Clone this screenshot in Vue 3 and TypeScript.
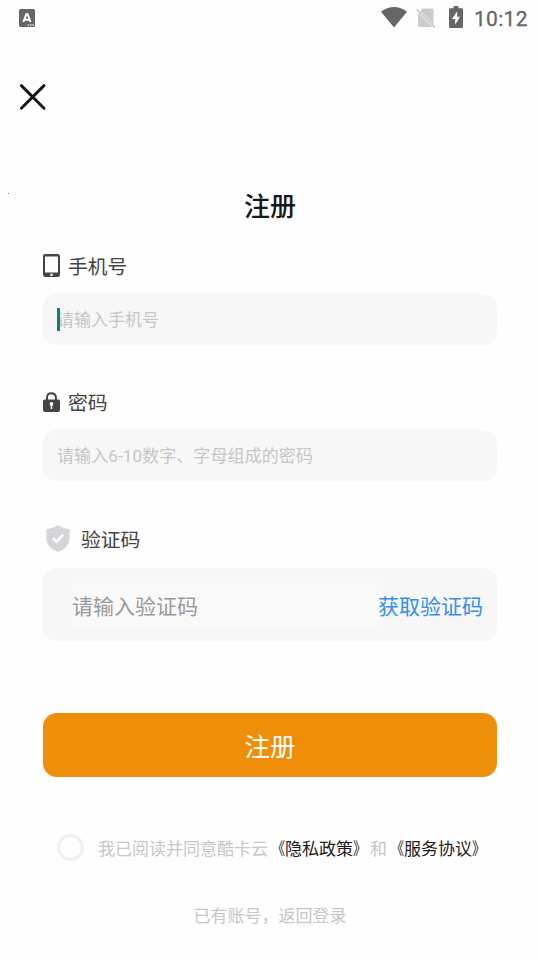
<script setup lang="ts">
import { ref } from 'vue'

const phone = ref('')
const password = ref('')
const code = ref('')
const agreed = ref(false)
</script>

<template>
  <div class="screen">
    <header class="status-bar">
      <svg class="app-icon" viewBox="0 0 16 18">
        <rect width="16" height="18" rx="1.5" fill="#666" />
        <path d="M4.4 13 L7.3 5.2 H8.6 L11.5 13 M5.8 10.7 H10.1" fill="none" stroke="#fff" stroke-width="1.9" />
        <path d="M8.6 16 H15" fill="none" stroke="#ddd" stroke-width="1.3" stroke-dasharray="1.6 .8" />
      </svg>
      <div class="status-right">
        <svg class="wifi" viewBox="0 0 26 21">
          <path d="M0 4.8 C7.5 -1.5 18.5 -1.5 26 4.8 L13 20.6 Z" fill="#666" />
        </svg>
        <svg class="no-sim" viewBox="0 0 20 20">
          <path d="M6.5 .4 H16 Q17.6 .4 17.6 2 V16.4 L4.2 3 Z M2 4.5 L16.4 19 H3.6 Q2 19 2 17.4 Z" fill="#ccc" />
          <path d="M.6 1.2 L18.8 19.4" stroke="#c4c4c4" stroke-width="1.5" />
        </svg>
        <svg class="battery" viewBox="0 0 14 22">
          <path d="M4.5 0 H9.5 V2.2 H12.8 Q14 2.2 14 3.4 V20.8 Q14 22 12.8 22 H1.2 Q0 22 0 20.8 V3.4 Q0 2.2 1.2 2.2 H4.5 Z" fill="#666" />
          <path d="M8.2 5.2 L3 13 H6.2 V18.8 L11 10.8 H8.2 Z" fill="#fff" />
        </svg>
        <time class="clock">10:12</time>
      </div>
    </header>

    <nav class="nav">
      <button class="close" type="button" aria-label="关闭">
        <svg viewBox="0 0 26 26">
          <path d="M1.4 1.6 L24 24.2 M24 1.6 L1.4 24.2" stroke="#151515" stroke-width="2.9" stroke-linecap="round" />
        </svg>
      </button>
    </nav>

    <div class="heading">
      <i class="speck"></i>
      <h1>注册</h1>
    </div>

    <form class="form" @submit.prevent>
      <section class="field">
        <label class="label" for="phone">
          <svg class="phone-icon" viewBox="0 0 17 23">
            <path fill-rule="evenodd" d="M2.2 0 H14.8 Q17 0 17 2.2 V20.8 Q17 23 14.8 23 H2.2 Q0 23 0 20.8 V2.2 Q0 0 2.2 0 Z M2 2.4 V18.6 H15 V2.4 Z" fill="#444" />
            <circle cx="8.5" cy="20.7" r="1.3" fill="#fff" />
          </svg>
          手机号
        </label>
        <div class="box">
          <input id="phone" v-model="phone" placeholder="请输入手机号" />
          <i class="caret"></i>
        </div>
      </section>

      <section class="field password">
        <label class="label" for="password">
          <svg class="lock-icon" viewBox="0 0 18 20" preserveAspectRatio="none">
            <path d="M4.3 8.5 V5.8 Q4.3 1.2 9 1.2 Q13.7 1.2 13.7 5.8 V8.5" fill="none" stroke="#444" stroke-width="2.1" />
            <rect y="7.5" width="18" height="12.5" rx="2" fill="#444" />
            <circle cx="9" cy="12" r="1.9" fill="#fff" />
            <path d="M8.2 12.5 H9.8 V17 H8.2 Z" fill="#fff" />
          </svg>
          密码
        </label>
        <div class="box">
          <input id="password" v-model="password" placeholder="请输入6-10数字、字母组成的密码" />
        </div>
      </section>

      <section class="field verify">
        <label class="label" for="code">
          <svg class="shield-icon" viewBox="0 0 24 27">
            <path d="M12 0 Q17 3.7 23.6 4 V14 Q23 22.5 12 27 Q1 22.5 .4 14 V4 Q7 3.7 12 0 Z" fill="#d3d5d8" />
            <path d="M6.8 13.2 L10.6 16.7 L17.2 9.9" fill="none" stroke="#fff" stroke-width="2.7" />
          </svg>
          验证码
        </label>
        <div class="box code-box">
          <input id="code" v-model="code" placeholder="请输入验证码" />
          <button class="get-code" type="button">获取验证码</button>
        </div>
      </section>

      <button class="submit" type="submit">注册</button>

      <div class="agreement">
        <button class="radio" :class="{ checked: agreed }" type="button" aria-label="同意" @click="agreed = !agreed"></button>
        <p>我已阅读并同意酷卡云<a><span class="open">《</span>隐私政策<span class="shut">》</span></a>和<a><span class="open">《</span>服务协议<span class="shut">》</span></a></p>
      </div>
    </form>

    <footer class="login">已有账号，返回登录</footer>
  </div>
</template>

<style>
body {
  background: #fefefe;
}
</style>

<style scoped>
.screen {
  box-sizing: border-box;
  width: 540px;
  height: 960px;
  overflow: hidden;
  background: #fefefe;
  color: #444;
  font-family: Roboto, "Noto Sans CJK SC", sans-serif;
}

svg {
  display: block;
  flex: none;
}

button,
input {
  margin: 0;
  padding: 0;
  border: 0;
  outline: 0;
  background: none;
  color: inherit;
  font-family: inherit;
}

.status-bar {
  display: flex;
  justify-content: space-between;
  height: 36px;
  padding: 0 12px 0 19px;
}

.app-icon {
  width: 16px;
  height: 18px;
  margin-top: 9px;
}

.status-right {
  display: flex;
  align-items: flex-start;
}

.wifi {
  width: 26px;
  height: 21px;
  margin: 7px 9px 0 0;
}

.no-sim {
  width: 20px;
  height: 20px;
  margin: 8px 13px 0 0;
}

.battery {
  width: 14px;
  height: 22px;
  margin: 6px 11px 0 0;
}

.clock {
  width: 54px;
  color: #666;
  font-size: 21px;
  font-weight: 400;
  line-height: 38px;
  letter-spacing: 0.3px;
  white-space: nowrap;
  -webkit-text-stroke: 0.3px #666;
}

.nav {
  height: 96px;
  padding: 48px 0 0 20px;
  box-sizing: border-box;
}

.close {
  display: block;
}

.close svg {
  width: 26px;
  height: 26px;
}

.heading {
  display: grid;
  grid-template-columns: 8px 1fr 8px;
  height: 110px;
  padding-top: 53px;
  box-sizing: border-box;
}

.speck {
  grid-column: 1;
  justify-self: end;
  width: 1px;
  height: 1px;
  margin: 8px -1px 0 0;
  background: #777;
}

h1 {
  margin: 0;
  color: #181818;
  font-size: 26px;
  font-weight: 500;
  line-height: 44px;
  text-align: center;
}

.form {
  padding: 0 43px;
}

.label {
  display: flex;
  align-items: center;
  height: 47px;
  gap: 8px;
  font-size: 19.8px;
}

.phone-icon {
  width: 17px;
  height: 23px;
}

.lock-icon {
  width: 17px;
  height: 20px;
}

.shield-icon {
  width: 24px;
  height: 27px;
  margin: 0 3px;
}

.box {
  position: relative;
  display: flex;
  align-items: center;
  box-sizing: border-box;
  height: 51px;
  margin-top: 5px;
  padding: 0 14px;
  border-radius: 14px;
  background: #f7f7f7;
}

.box input {
  flex: 1;
  min-width: 0;
  height: 30px;
  font-size: 17px;
}

.box input::placeholder {
  color: #c6c6c6;
  opacity: 1;
}

#password {
  letter-spacing: 0.1px;
}

.caret {
  position: absolute;
  top: 14px;
  left: 14px;
  width: 3px;
  height: 23px;
  background: #078477;
}

.password {
  padding-top: 33px;
}

.verify {
  padding-top: 34px;
}

.verify .box {
  margin-top: 6px;
}

.code-box {
  height: 73px;
  padding-left: 29px;
}

.code-box input {
  height: 46px;
  padding-top: 4px;
  box-sizing: border-box;
  background: #f9f9f9;
  font-size: 21px;
}

.code-box input::placeholder {
  color: #999;
}

.get-code {
  color: #348ff0;
  font-size: 21px;
}

.submit {
  display: block;
  width: 100%;
  height: 64px;
  margin-top: 72px;
  padding-bottom: 2px;
  border-radius: 14px;
  background: #ef8e09;
  color: #fff;
  font-size: 25.5px;
}

.agreement {
  display: flex;
  align-items: center;
  height: 28px;
  margin-top: 56px;
  padding-left: 14px;
  white-space: nowrap;
}

.radio {
  flex: none;
  box-sizing: border-box;
  width: 27px;
  height: 27px;
  border: 3px solid #f0f0f0;
  border-radius: 50%;
}

.radio.checked {
  background: #ef8e09;
}

.agreement p {
  margin: 0 0 0 14px;
  color: #c6c6c6;
  font-size: 17px;
}

.agreement a {
  color: #1c1c1c;
}

.open,
.shut {
  display: inline-block;
  transform: scaleX(0.8);
}

.open {
  transform-origin: right;
}

.shut {
  transform-origin: left;
}

.login {
  margin-top: 41px;
  color: #c6c6c6;
  font-size: 17px;
  line-height: 28px;
  text-align: center;
}
</style>
